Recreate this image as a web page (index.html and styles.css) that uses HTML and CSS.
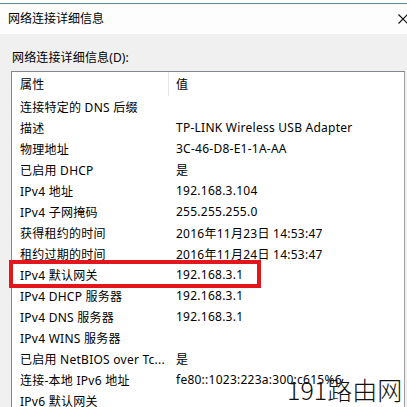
FILE: index.html
```html
<!DOCTYPE html>
<html lang="zh-CN">
<head>
<meta charset="utf-8">
<title>网络连接详细信息</title>
<link rel="stylesheet" href="styles.css">
</head>
<body>
<div class="window">
  <div class="titlebar">
    <span class="title">网络连接详细信息</span>
    <svg class="close" width="10" height="10" viewBox="0 0 10 10"><path d="M0.5 0.5 L9.5 9.5 M9.5 0.5 L0.5 9.5" stroke="#111" stroke-width="1.1" fill="none"/></svg>
  </div>
  <div class="content">
    <div class="label">网络连接详细信息(D):</div>
    <div class="list">
      <div class="row head"><div class="prop">属性</div><div class="val">值</div></div>
      <div class="row"><div class="prop">连接特定的 DNS 后缀</div><div class="val"></div></div>
      <div class="row"><div class="prop">描述</div><div class="val">TP-LINK Wireless USB Adapter</div></div>
      <div class="row"><div class="prop">物理地址</div><div class="val">3C-46-D8-E1-1A-AA</div></div>
      <div class="row"><div class="prop">已启用 DHCP</div><div class="val">是</div></div>
      <div class="row"><div class="prop">IPv4 地址</div><div class="val">192.168.3.104</div></div>
      <div class="row"><div class="prop">IPv4 子网掩码</div><div class="val">255.255.255.0</div></div>
      <div class="row"><div class="prop">获得租约的时间</div><div class="val">2016年11月23日 14:53:47</div></div>
      <div class="row"><div class="prop">租约过期的时间</div><div class="val">2016年11月24日 14:53:47</div></div>
      <div class="row"><div class="prop">IPv4 默认网关</div><div class="val">192.168.3.1</div></div>
      <div class="row"><div class="prop">IPv4 DHCP 服务器</div><div class="val">192.168.3.1</div></div>
      <div class="row"><div class="prop">IPv4 DNS 服务器</div><div class="val">192.168.3.1</div></div>
      <div class="row"><div class="prop">IPv4 WINS 服务器</div><div class="val"></div></div>
      <div class="row"><div class="prop">已启用 NetBIOS over Tc...</div><div class="val">是</div></div>
      <div class="row"><div class="prop">连接-本地 IPv6 地址</div><div class="val">fe80::1023:223a:300:c615%6</div></div>
      <div class="row"><div class="prop">IPv6 默认网关</div><div class="val"></div></div>
    </div>
  </div>
  <div class="highlight"></div>
  <div class="watermark">191路由网</div>
</div>
</body>
</html>
```

FILE: styles.css
```css
html, body {
  margin: 0;
  padding: 0;
}
body {
  width: 407px;
  height: 407px;
  overflow: hidden;
  background: #f0f0f0;
  font-family: "Noto Sans", "Noto Sans CJK SC", sans-serif;
  font-size: 12px;
  color: #000;
}
.window {
  position: relative;
  width: 407px;
  height: 407px;
  padding-top: 3px;
  box-sizing: border-box;
  background: linear-gradient(#fdfdfd 0, #fdfdfd 3px, #f0f0f0 3px);
}
.titlebar {
  height: 30px;
  border-top: 1px solid #66889a;
  background: #fdfdfd;
  display: flex;
  align-items: center;
  justify-content: space-between;
  padding-left: 8px;
  padding-right: 0;
}
.title {
  line-height: 16px;
}
.close {
  margin-right: -1px;
  display: block;
}
.content {
  padding: 16px 2px 0 11px;
}
.label {
  line-height: 16px;
  padding-left: 1px;
  margin-bottom: 5px;
  letter-spacing: 0.15px;
}
.list {
  width: 394px;
  box-sizing: border-box;
  border: 1px solid #828790;
  border-right-color: #a0a0a0;
  background: #fff;
  height: 340px;
  overflow: hidden;
  letter-spacing: 0.25px;
}
.row {
  display: grid;
  grid-template-columns: 157px 1fr;
  height: 21px;
  align-items: center;
  white-space: nowrap;
}
.row.head {
  height: 24px;
  align-items: stretch;
}
.row.head .prop {
  border-right: 1px solid #e5e5e5;
  display: flex;
  align-items: center;
}
.row.head .val {
  display: flex;
  align-items: center;
}
.prop {
  padding-left: 8px;
  overflow: hidden;
}
.val {
  padding-left: 7px;
  overflow: hidden;
}
.highlight {
  position: absolute;
  left: 9px;
  top: 260px;
  width: 252px;
  height: 28px;
  box-sizing: border-box;
  border: 4px solid #e3151d;
}
.watermark {
  position: absolute;
  left: 287px;
  top: 372px;
  font-family: "Noto Sans CJK SC", sans-serif;
  font-weight: 300;
  font-size: 25px;
  line-height: 34px;
  color: #111;
  white-space: nowrap;
}
```
